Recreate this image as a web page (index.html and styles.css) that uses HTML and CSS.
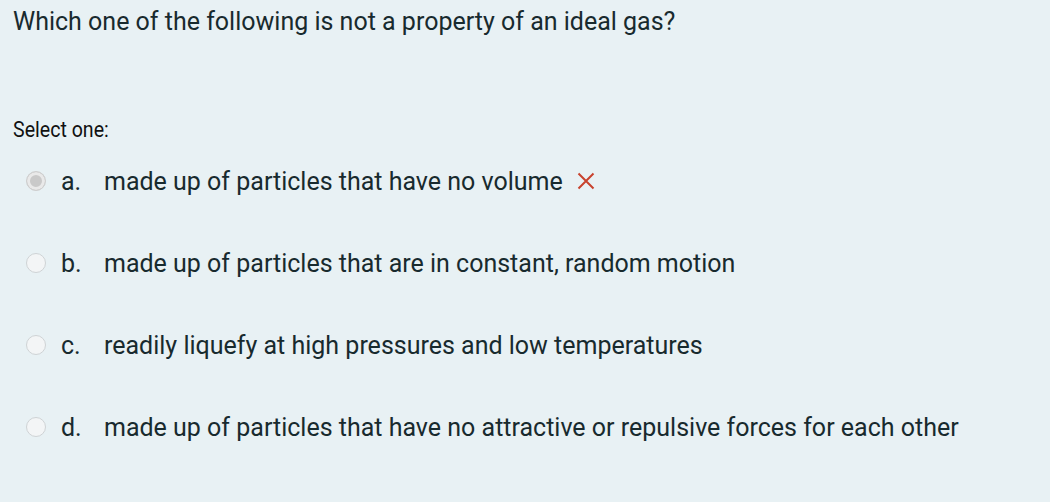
FILE: index.html
```html
<!DOCTYPE html>
<html lang="en">
<head>
    <meta charset="UTF-8">
    <title>Question</title>
    <link rel="stylesheet" href="styles.css">
</head>
<body>
    <div class="question">
        <h2 class="qtext">Which one of the following is not a property of an ideal gas?</h2>

        <div class="prompt"><span>Select one:</span></div>

        <div class="answers">
            <div class="option">
                <span class="radio checked"></span>
                <span class="letter">a.</span>
                <span class="text">made up of particles that have no volume</span>
                <svg class="wrong" width="18" height="18" viewBox="0 0 18 18">
                    <path d="M1.5 1.5 L16.5 16.5 M16.5 1.5 L1.5 16.5" stroke="#c8432e" stroke-width="2" fill="none"/>
                </svg>
            </div>
            <div class="option">
                <span class="radio"></span>
                <span class="letter">b.</span>
                <span class="text">made up of particles that are in constant, random motion</span>
            </div>
            <div class="option">
                <span class="radio"></span>
                <span class="letter">c.</span>
                <span class="text">readily liquefy at high pressures and low temperatures</span>
            </div>
            <div class="option">
                <span class="radio"></span>
                <span class="letter">d.</span>
                <span class="text">made up of particles that have no attractive or repulsive forces for each other</span>
            </div>
        </div>
    </div>
</body>
</html>
```

FILE: styles.css
```css
html, * {
    box-sizing: border-box;
    margin: 0;
    padding: 0;
}

body {
    background: #e8f1f4;
    color: #182a2e;
    font-family: Roboto, "Liberation Sans", sans-serif;
    width: 1050px;
    height: 502px;
    overflow: hidden;
}

.question {
    padding: 6px 13px;
}

.qtext {
    font-size: 25px;
    font-weight: 400;
    line-height: 32px;
    color: #182a2e;
}

.prompt {
    margin-top: 78px;
    font-size: 22px;
    line-height: 28px;
    color: #111;
}

.prompt span {
    display: inline-block;
    transform: scaleX(0.89);
    transform-origin: left center;
}

.answers {
    margin-top: 21px;
    display: flex;
    flex-direction: column;
    gap: 50px;
}

.option {
    display: flex;
    align-items: center;
    height: 32px;
    font-size: 25px;
    padding-left: 13px;
}

.radio {
    width: 20px;
    height: 20px;
    border-radius: 50%;
    border: 1.5px solid #cfd3d5;
    background: #f3f5f6;
    margin-right: 15px;
    flex: none;
}

.radio.checked {
    background: #c9c9c9;
    border: 1.5px solid #cfcfcf;
    box-shadow: inset 0 0 0 3px #e9e9e9;
}

.letter {
    width: 43px;
}

.wrong {
    margin-left: 14px;
}
```
